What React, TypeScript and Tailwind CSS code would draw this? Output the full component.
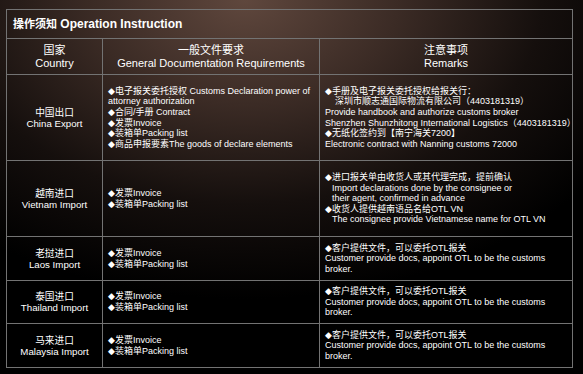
import React from "react";

const FONT = '"Liberation Sans", "DejaVu Sans", "Noto Sans CJK SC", sans-serif';

type Line = { t: string; indent?: number };

function Lines({ lines }: { lines: Line[] }) {
  return (
    <div className="flex flex-col text-[9px] leading-[10.6px] text-white">
      {lines.map((l, i) => (
        <div
          key={i}
          className="whitespace-nowrap"
          style={l.indent ? { paddingLeft: l.indent } : undefined}
        >
          {l.t}
        </div>
      ))}
    </div>
  );
}

function Country({ zh, en }: { zh: string; en: string }) {
  return (
    <div className="flex w-[95px] shrink-0 flex-col items-center justify-center text-center text-[9.7px] leading-[11px] text-white">
      <div className="whitespace-nowrap">{zh}</div>
      <div className="whitespace-nowrap">{en}</div>
    </div>
  );
}

const docs: Line[] = [{ t: "◆发票Invoice" }, { t: "◆装箱单Packing list" }];
const laos: Line[] = [
  { t: "◆客户提供文件，可以委托OTL报关" },
  { t: "Customer provide docs, appoint OTL to be the customs" },
  { t: "broker." },
];

const rows: { zh: string; en: string; h: string; docs: Line[]; rem: Line[] }[] = [
  {
    zh: "中国出口",
    en: "China Export",
    h: "h-[86px]",
    docs: [
      { t: "◆电子报关委托授权 Customs Declaration power of" },
      { t: "attorney authorization" },
      { t: "◆合同/手册 Contract" },
      { t: "◆发票Invoice" },
      { t: "◆装箱单Packing list" },
      { t: "◆商品申报要素The goods of declare elements" },
    ],
    rem: [
      { t: "◆手册及电子报关委托授权给报关行：" },
      { t: "深圳市顺志通国际物流有限公司（4403181319）", indent: 10 },
      { t: "Provide handbook and authorize customs broker" },
      { t: "Shenzhen Shunzhitong International Logistics（4403181319）" },
      { t: "◆无纸化签约到【南宁海关7200】" },
      { t: "Electronic contract with Nanning customs 72000" },
    ],
  },
  {
    zh: "越南进口",
    en: "Vietnam Import",
    h: "h-[76px]",
    docs,
    rem: [
      { t: "◆进口报关单由收货人或其代理完成，提前确认" },
      { t: "Import declarations done by the consignee or", indent: 7 },
      { t: "their agent, confirmed in advance", indent: 7 },
      { t: "◆收货人提供越南语品名给OTL VN" },
      { t: "The consignee provide Vietnamese name for OTL VN", indent: 7 },
    ],
  },
  { zh: "老挝进口", en: "Laos Import", h: "h-[44px]", docs, rem: laos },
  { zh: "泰国进口", en: "Thailand Import", h: "h-[43px]", docs, rem: laos },
  { zh: "马来进口", en: "Malaysia Import", h: "h-[44px]", docs, rem: laos },
];

export default function App() {
  return (
    <div
      className="h-[374px] w-[583px] overflow-hidden bg-[radial-gradient(ellipse_75%_80%_at_42%_0%,#5f473d_0%,#3b2b25_35%,#150f0d_68%,#000_100%)] pl-[6px] pt-[9px]"
      style={{ fontFamily: FONT }}
    >
      <div className="w-[567px] border border-[#737373] text-white">
        <div className="flex h-[28px] items-center pl-[6px] text-[12px] font-bold">
          <span className="text-[11px]">操作须知</span>
          <span>&nbsp;Operation Instruction</span>
        </div>
        <div className="flex h-[36px] border-t border-[#737373] text-[11px] leading-[13px]">
          <div className="flex w-[95px] shrink-0 flex-col items-center justify-center text-center">
            <div>国家</div>
            <div>Country</div>
          </div>
          <div className="flex w-[217px] shrink-0 flex-col items-center justify-center border-l border-[#737373] text-center">
            <div>一般文件要求</div>
            <div className="whitespace-nowrap">General Documentation Requirements</div>
          </div>
          <div className="flex flex-1 flex-col items-center justify-center border-l border-[#737373] text-center">
            <div>注意事项</div>
            <div>Remarks</div>
          </div>
        </div>
        {rows.map((r, i) => (
          <div key={i} className={`flex border-t border-[#737373] ${r.h}`}>
            <Country zh={r.zh} en={r.en} />
            <div className="flex w-[217px] shrink-0 items-center border-l border-[#737373] pl-[5px]">
              <Lines lines={r.docs} />
            </div>
            <div className="flex flex-1 items-center border-l border-[#737373] pl-[5px]">
              <Lines lines={r.rem} />
            </div>
          </div>
        ))}
      </div>
    </div>
  );
}
